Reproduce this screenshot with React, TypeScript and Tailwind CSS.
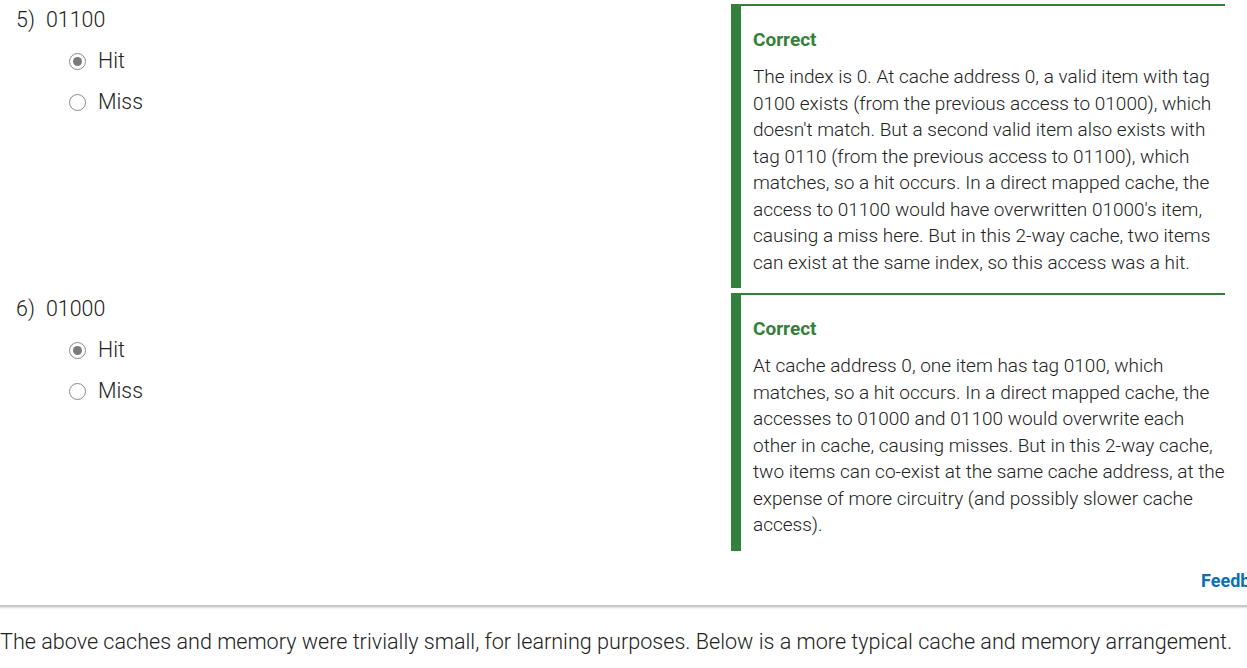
type Question = {
  num: number;
  value: string;
  selected: 'Hit' | 'Miss';
  explanation: string;
};

const questions: Question[] = [
  {
    num: 5,
    value: '01100',
    selected: 'Hit',
    explanation:
      "The index is 0. At cache address 0, a valid item with tag 0100 exists (from the previous access to 01000), which doesn't match. But a second valid item also exists with tag 0110 (from the previous access to 01100), which matches, so a hit occurs. In a direct mapped cache, the access to 01100 would have overwritten 01000's item, causing a miss here. But in this 2-way cache, two items can exist at the same index, so this access was a hit.",
  },
  {
    num: 6,
    value: '01000',
    selected: 'Hit',
    explanation:
      'At cache address 0, one item has tag 0100, which matches, so a hit occurs. In a direct mapped cache, the accesses to 01000 and 01100 would overwrite each other in cache, causing misses. But in this 2-way cache, two items can co-exist at the same cache address, at the expense of more circuitry (and possibly slower cache access).',
  },
];

function Radio({ checked }: { checked: boolean }) {
  return (
    <span className="flex h-[17px] w-[17px] items-center justify-center rounded-full border border-[#8a8a8a] bg-white">
      {checked && <span className="h-[9px] w-[9px] rounded-full bg-[#7a7a7a]" />}
    </span>
  );
}

function QuestionRow({ q }: { q: Question }) {
  return (
    <div className="flex">
      <div className="w-[731px] shrink-0 pl-[16px] pt-[1px]">
        <div className="flex pb-[6px] text-[21.4px] leading-[30px] text-[#222]">
          <span className="w-[30px]">{q.num})</span>
          <span>{q.value}</span>
        </div>
        {(['Hit', 'Miss'] as const).map((opt) => (
          <div key={opt} className="flex h-[41px] items-center pl-[53px] text-[21.4px] text-[#222]">
            <Radio checked={q.selected === opt} />
            <span className="ml-[12px]">{opt}</span>
          </div>
        ))}
      </div>
      <div className="w-[494px] shrink-0 border-l-[10px] border-t-2 border-[#34803a] pb-[12px] pl-[12px] pr-0 pt-[21px]">
        <div className="text-[19px] font-bold leading-[26px] text-[#34803a]">Correct</div>
        <p className="mt-[11px] text-[19px] leading-[26.5px] text-[#222]">{q.explanation}</p>
      </div>
    </div>
  );
}

export default function App() {
  return (
    <div className="w-[1247px] overflow-hidden bg-white pt-[4px] font-['Roboto',sans-serif] font-light">
      <div className="flex flex-col gap-[5px]">
        {questions.map((q) => (
          <QuestionRow key={q.num} q={q} />
        ))}
      </div>
      <div className="mt-[19px] whitespace-nowrap pl-[1201px] text-[18px] font-bold leading-[22px] text-[#0b70b6]">
        Feedback?
      </div>
      <div className="mt-[13px] h-[2px] w-full bg-[#c8c8c8] shadow-[0_1px_2px_rgba(0,0,0,0.15)]" />
      <p className="mt-[20px] whitespace-nowrap text-[21.6px] leading-[30px] text-[#222]">
        The above caches and memory were trivially small, for learning purposes. Below is a more typical cache and memory arrangement.
      </p>
    </div>
  );
}
